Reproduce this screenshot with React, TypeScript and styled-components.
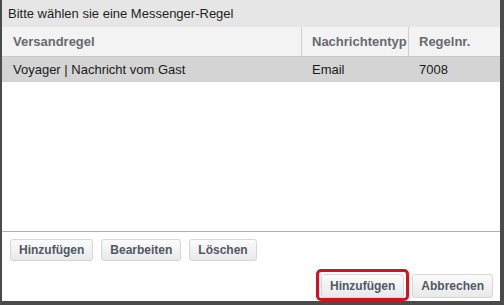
import React from "react";
import styled, { createGlobalStyle } from "styled-components";

const Global = createGlobalStyle`
  html, body { margin: 0; padding: 0; background: #4b4b4b; }
  body { font-family: "Liberation Sans", Arial, sans-serif; }
  #root { width: 504px; height: 305px; overflow: hidden; }
`;

const Dialog = styled.div`
  margin-left: 2px;
  width: 498px;
  height: 301px;
  background: #ffffff;
  display: flex;
  flex-direction: column;
  font-size: 13px;
`;

const Title = styled.div`
  height: 27px;
  line-height: 27px;
  padding-left: 6px;
  background: #e6e6e6;
  color: #1f1f1f;
  font-size: 13px;
`;

const Grid = styled.div<{ $header?: boolean }>`
  display: grid;
  grid-template-columns: 299px 107px 1fr;
  height: ${(p) => (p.$header ? "29px" : "25px")};
  background: ${(p) => (p.$header ? "#f3f3f3" : "#d4d4d4")};
  border-bottom: ${(p) => (p.$header ? "1px solid #c8c8c8" : "none")};
`;

const Cell = styled.div<{ $header?: boolean; $sep?: boolean }>`
  display: flex;
  align-items: center;
  padding: 0 10px;
  font-weight: ${(p) => (p.$header ? "bold" : "normal")};
  color: ${(p) => (p.$header ? "#666a70" : "#1a1a1a")};
  border-left: 1px solid ${(p) => (p.$sep && p.$header ? "#cfcfcf" : "transparent")};
  white-space: nowrap;
`;

const ListBody = styled.div`
  flex: 1;
  border-bottom: 1px solid #b0b0b0;
`;

const Toolbar = styled.div`
  display: flex;
  gap: 8px;
  padding: 7px 8px 0;
`;

const Footer = styled.div`
  display: flex;
  justify-content: flex-end;
  align-items: flex-start;
  gap: 3px;
  padding: 8px 7px 0 0;
`;

const Highlight = styled.div`
  border: 3px solid #d8101c;
  border-radius: 5px;
  padding: 2px 2px 0;
  display: flex;
`;

const Button = styled.button<{ $h?: number; $offset?: number }>`
  height: ${(p) => p.$h ?? 22}px;
  margin: ${(p) => p.$offset ?? 0}px 0 0;
  padding: 0 8px;
  border: 1px solid #d6d6d6;
  border-radius: 3px;
  background: linear-gradient(#fbfbfb, #e9e9e9);
  color: #505866;
  font-family: "Liberation Sans", Arial, sans-serif;
  font-size: 12px;
  font-weight: bold;
  cursor: pointer;
`;

export default function App() {
  return (
    <>
      <Global />
      <Dialog>
        <Title>Bitte wählen sie eine Messenger-Regel</Title>
        <Grid $header>
          <Cell $header>Versandregel</Cell>
          <Cell $header $sep>Nachrichtentyp</Cell>
          <Cell $header $sep>Regelnr.</Cell>
        </Grid>
        <Grid>
          <Cell>Voyager | Nachricht vom Gast</Cell>
          <Cell $sep>Email</Cell>
          <Cell $sep>7008</Cell>
        </Grid>
        <ListBody />
        <Toolbar>
          <Button>Hinzufügen</Button>
          <Button>Bearbeiten</Button>
          <Button>Löschen</Button>
        </Toolbar>
        <Footer>
          <Highlight>
            <Button $h={24}>Hinzufügen</Button>
          </Highlight>
          <Button $h={24} $offset={5}>Abbrechen</Button>
        </Footer>
      </Dialog>
    </>
  );
}
